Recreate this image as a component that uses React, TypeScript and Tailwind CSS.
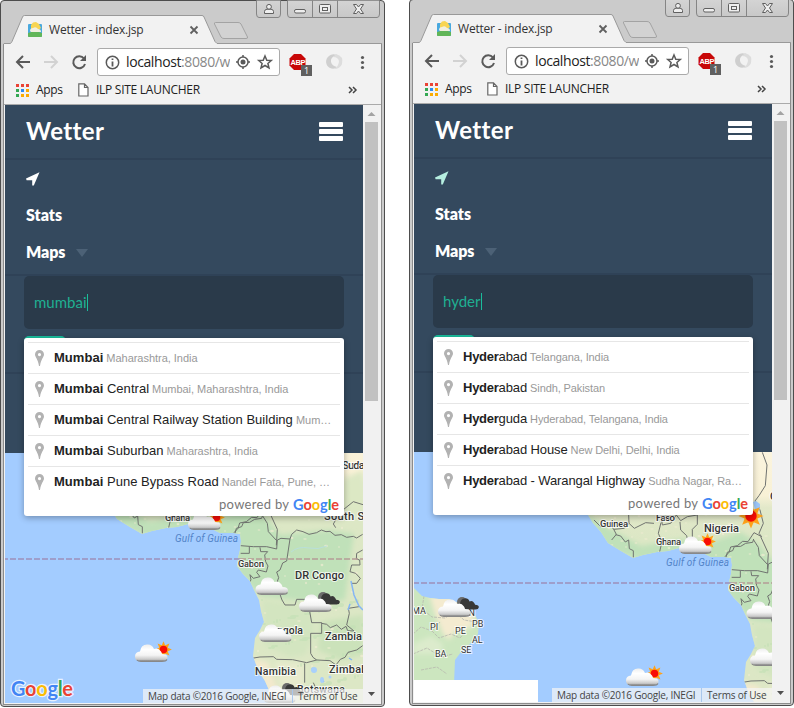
import React from "react";

type Place = { match: string; rest: string; area: string };
type WindowProps = {
  query: string;
  places: Place[];
  arrow: string;
  viewBox: string;
  west?: boolean;
};

const GOOGLE: [string, string][] = [
  ["G", "#4285f4"],
  ["o", "#ea4335"],
  ["o", "#fbbc05"],
  ["g", "#4285f4"],
  ["l", "#34a853"],
  ["e", "#ea4335"],
];

function GoogleLetters() {
  return (
    <>
      {GOOGLE.map(([c, color], i) => (
        <tspan key={i} fill={color}>
          {c}
        </tspan>
      ))}
    </>
  );
}

function Sun({ x, y, r = 4 }: { x: number; y: number; r?: number }) {
  const rays = [0, 45, 90, 135, 180, 225, 270, 315];
  return (
    <g transform={`translate(${x} ${y})`}>
      {rays.map((a) => (
        <path key={a} transform={`rotate(${a})`} d={`M${-r * 0.5} ${-r}L0 ${-r * 2.2}L${r * 0.5} ${-r}Z`} fill="#ffa21a" />
      ))}
      <circle r={r * 1.2} fill="#ffa21a" />
      <circle r={r} fill="#f80d05" />
    </g>
  );
}

const CLOUD = "M5 17Q0 17 0 12.500Q0 8 5 7.500Q6 0.500 12 0.500Q17 0 19 5Q23 3 26 7.500Q27 9 27 10Q33 10 32.500 14Q32 17 28 17Z";

function Weather({ x, y, kind }: { x: number; y: number; kind?: "sun" | "dark" }) {
  return (
    <g transform={`translate(${x} ${y})`}>
      {kind === "sun" && <Sun x={28.5} y={5.5} r={3.8} />}
      {kind === "dark" && (
        <g transform="translate(18 -3)">
          <circle cx="6" cy="6" r="5" fill="#6c6c6c" />
          <path transform="scale(.68) translate(1 3)" d={CLOUD} fill="#383838" />
        </g>
      )}
      <path d={CLOUD} fill="url(#cloudfill)" />
      <path d="M2 16Q3 17.400 6 17.400H27Q31 17.400 32 15.500" fill="none" stroke="#888" strokeWidth="1.100" />
    </g>
  );
}

function Label({ x, y, w, children, size = 11, small = false }: { x: number; y: number; w?: number; children: string; size?: number; small?: boolean }) {
  return (
    <text
      x={x}
      y={y}
      fontSize={size}
      textLength={w}
      fontFamily="Roboto, sans-serif"
      fontWeight={small ? 400 : 500}
      fill="#333"
      stroke="#fff"
      strokeOpacity="0.75"
      strokeWidth="2"
      paintOrder="stroke"
    >
      {children}
    </text>
  );
}

function WorldMap({ viewBox, west }: { viewBox: string; west?: boolean }) {
  return (
    <svg viewBox={viewBox} className="block h-[250px] w-[358px]">
      <defs>
        <linearGradient id="cloudfill" x1="0" y1="0" x2="0" y2="1">
          <stop offset="0" stopColor="#eeeeee" />
          <stop offset=".3" stopColor="#ffffff" />
          <stop offset=".65" stopColor="#f4f4f4" />
          <stop offset=".9" stopColor="#c9c9c9" />
          <stop offset="1" stopColor="#888" />
        </linearGradient>
        <linearGradient id="sahel" x1="0" y1="428" x2="0" y2="515" gradientUnits="userSpaceOnUse">
          <stop offset="0" stopColor="#fbf4de" />
          <stop offset=".5" stopColor="#f8f1d6" />
          <stop offset=".64" stopColor="#e2e8c9" />
          <stop offset="1" stopColor="#dce7c5" />
        </linearGradient>
        <filter id="soft" x="-20%" y="-20%" width="140%" height="140%">
          <feGaussianBlur stdDeviation="2.500" />
        </filter>
        <clipPath id="africa">
          <path d="M60 428L82 470L97 491L102 499L110 508L117 519L130 527L142 534L152 531L166 528L177 527L188 524L206 524L214 530L220 533L233 533L240 534L241 541L240 550L238 558L237 566L243 574L250 581L254 590L259 600L261 611L264 622L260 630L255 638L253 656L258 670L265 681L269 690L272 704H364V428Z" />
        </clipPath>
        <clipPath id="brazil">
          <path d="M-78 563L-74 567L-69 572L-61 574L-52 575L-42 575L-33 579L-26 584L-16 591L-12 599L-13 610L-20 619L-30 628L-36 636L-37 660H-78Z" />
        </clipPath>
      </defs>
      <rect x="-78" y="428" width="442" height="276" fill="#a3ccff" />
      <g clipPath="url(#africa)">
        <rect x="60" y="428" width="304" height="276" fill="url(#sahel)" />
        <g filter="url(#soft)">
          <path d="M95 490L120 505L150 522L190 515L220 518L250 508L268 520L280 535L330 530L354 534L350 560L345 600L315 603L295 600L260 596L235 570V540L160 540L100 520Z" fill="#c0e1b9" />
          <path d="M262 600L295 604L310 612L315 633L305 655L290 657L265 645Z" fill="#d3e5c0" />
          <path d="M320 622L363 615V655L340 660L318 650Z" fill="#cbe2ba" />
          <path d="M250 658L268 662L278 690L290 704H260Z" fill="#f3e9cd" />
          <path d="M275 662L304 664V704H284Z" fill="#e8ebcd" />
          <path d="M345 480L363 470V515L340 510Z" fill="#dce8c4" />
        </g>
        <g fill="#f1edd3" opacity=".7">
          {Array.from({ length: 90 }, (_, i) => {
            const x = 105 + ((i * 67) % 258);
            const y = 491 + ((i * 43) % 44) + (x > 240 ? (i * 17) % 165 : 0);
            return <ellipse key={i} cx={x} cy={y} rx={0.9 + (i % 3) * 0.5} ry={0.7 + (i % 2) * 0.5} />;
          })}
        </g>
        <g fill="#c2e0b4" opacity=".6">
          {Array.from({ length: 75 }, (_, i) => (
            <ellipse key={i} cx={262 + ((i * 53) % 102)} cy={600 + ((i * 37) % 100)} rx={1 + (i % 3)} ry={1 + (i % 2)} />
          ))}
        </g>
        <path d="M291 552Q298 546 309 548Q318 550 327 546" fill="none" stroke="#b9dfda" strokeWidth="1" />
        <g fill="none" stroke="#6f726f" strokeWidth="3" strokeLinejoin="round">
          <g transform="translate(200 500) scale(.33333)">
            <path d="M122 137L160 140L200 140L230 147L232 120L243 115L270 117M148 140V160H122M180 142L182 155L203 155L194 165L197 185L204 198L199 216L175 210L170 217L180 230L160 235L150 224L153 240L148 247" />
            <path d="M105 100L109 85L125 80L130 68L149 67L164 58L185 55L188 45M188 48L202 70L205 95L230 122" />
            <path d="M270 117L275 103L290 90L309 95L327 103L350 98L364 90L378 95L390 94L405 106L424 104L440 112L460 109L470 114L488 103M270 117L265 150L260 183L248 189L240 210L230 216L236 233L230 250" />
            <path d="M240 283L246 300L255 315H285L290 298L322 298L331 345L335 368H365V400H332V460L339 472L350 480M365 370L380 373L391 383L410 375L424 388L438 379L443 392L462 393L440 375L448 340L445 325L477 320" />
            <path d="M155 475L180 471L220 470L230 478L278 479L320 488L350 480L390 482L408 495L421 478L435 472L444 457L470 450L488 437M314 490V548M270 575V608M340 548L350 570L385 580" />
            <path d="M488 150L470 160L469 177L479 180L480 195L455 195L450 215L467 220L481 235L470 250L455 250M370 0L390 18L407 7L430 29L460 5L489 14M407 83L400 72L407 60" />
          </g>
          <g transform="translate(103 416) scale(.33333)">
            <path d="M505 37L519 75L514 137L495 167L483 183L498 210L508 250L495 280L503 290L480 278L462 305L446 304L430 317L410 321L405 337L393 350M500 290L523 340L520 388" />
            <path d="M0 240L20 260L45 248L59 268L91 265L105 250L104 225M59 268L67 283L53 300M65 284L80 288L94 306L104 300L106 326L118 332V352M197 335L204 305L193 280L201 248M201 225L205 255L230 250L247 225L260 242L280 230L310 225V253L295 268V335M258 246L260 270L278 287L285 320M105 250L121 265L155 248L180 250" />
          </g>
        </g>
        <path d="M351 581L354 595L359 606L363 610M348 610L350 604M312 668L315 672M322 680L324 682M349 658L352 660" fill="none" stroke="#86b6f4" strokeWidth="1.500" />
        <path d="M262 478L265 477L269 480V485L265 489Z" fill="#9dc8fb" />
        <g fill="#a9d0fb">
          <ellipse cx="314" cy="670" rx="3" ry="3" />
          <ellipse cx="322" cy="680" rx="2" ry="3" />
          <circle cx="330" cy="677" r="1.500" />
        </g>
      </g>
      <g clipPath="url(#brazil)">
        <rect x="-78" y="555" width="80" height="110" fill="#cce6bf" />
        <g filter="url(#soft)">
          <path d="M-62 570L-30 574L-16 590L-20 604L-35 606L-42 616L-48 610L-56 590Z" fill="#f4ebd0" />
          <path d="M-78 620L-60 612L-48 620L-50 630L-78 630Z" fill="#dcebcc" />
        </g>
        <path d="M-67 572L-69 585L-59 593L-46 594L-36 588L-27 596L-15 598M-78 610L-70 603L-59 607L-51 598M-59 607L-52 614L-40 610L-31 614L-26 608M-78 630L-64 624L-50 633L-38 630M-70 646L-54 643L-44 650" fill="none" stroke="#b7b8ae" strokeWidth=".8" strokeDasharray="3 1" />
      </g>
      <path d="M-78 559H240" stroke="#9d8fbb" strokeWidth="1.500" strokeDasharray="6 2" />
      <path d="M240 559H364" stroke="#b49c96" strokeWidth="1.500" strokeDasharray="6 2" />
      <text x="175" y="542" textLength="63" fontSize="10" fontStyle="italic" fontFamily="Roboto, sans-serif" fill="#5384c9">
        Gulf of Guinea
      </text>
      <Label x={165} y={521} w={25} size={9.5}>Ghana</Label>
      <Label x={238} y={567} w={26} size={9.5}>Gabon</Label>
      {west ? (
        <>
          <Label x={109} y={503} w={28} size={9.5}>Guinea</Label>
          <Label x={165} y={497} w={19} size={9.5}>Faso</Label>
          <Label x={213} y={508} w={35}>Nigeria</Label>
          <Label x={279} y={476} w={24}>Chad</Label>
          <Label x={256} y={699} w={41} size={10.5}>Namibia</Label>
          <Label x={-79} y={590} size={9} small>MA</Label>
          <Label x={-61} y={606} size={9} small>PI</Label>
          <Label x={-36} y={610} size={9} small>PE</Label>
          <Label x={-28} y={592} size={9} small>RN</Label>
          <Label x={-19} y={603} size={9} small>PB</Label>
          <Label x={-19} y={619} size={9} small>AL</Label>
          <Label x={-30} y={629} size={9} small>SE</Label>
          <Label x={-56} y={633} size={9} small>BA</Label>
          <Sun x={260} y={492} r={5.7} />
          <Weather x={-53} y={575} kind="dark" />
        </>
      ) : (
        <>
          <Label x={342} y={469} w={28}>Sudan</Label>
          <Label x={324} y={520} w={66}>South Sudan</Label>
          <Label x={295} y={579} w={49}>DR Congo</Label>
          <Label x={270} y={634} w={33} size={10.5}>Angola</Label>
          <Label x={325} y={640} w={37}>Zambia</Label>
          <Label x={329} y={673} w={53}>Zimbabwe</Label>
          <Label x={255} y={675} w={41} size={10.5}>Namibia</Label>
          <Label x={297} y={693} w={48} size={10.5}>Botswana</Label>
          <Weather x={263} y={685} kind="dark" />
        </>
      )}
      <Weather x={188} y={512} kind="sun" />
      <Weather x={255.5} y={577} />
      <Weather x={299} y={594} kind="dark" />
      <Weather x={259} y={624} />
      <Weather x={135} y={644} kind="sun" />
    </svg>
  );
}

function TabStrip() {
  return (
    <div className="relative h-[42px]">
      <svg className="absolute -left-px -top-px" width="385" height="44" fill="none">
        <defs>
          <linearGradient id="btn" x1="0" y1="0" x2="0" y2="1">
            <stop offset="0" stopColor="#d4d4d4" />
            <stop offset="1" stopColor="#c8c8c8" />
          </linearGradient>
        </defs>
        <path d="M4 43.500H10.500L12 41.500L22.500 17Q23 15.500 24.500 15.500H202Q203.500 15.500 204 17L215 41.500L217 43.500H381V45H4Z" fill="#f2f2f2" />
        <path d="M4 43.500H10.500L12 41.500L22.500 17Q23 15.500 24.500 15.500H202Q203.500 15.500 204 17L215 41.500L217 43.500H382" stroke="#999" />
        <path d="M215.500 22.500H238Q240 22.500 241 24L247.500 37Q248 38.500 246 38.500H224Q222 38.500 221 37L214.500 24Q214 22.500 215.500 22.500Z" fill="#d2d2d2" stroke="#a3a3a3" />
        <g fill="url(#btn)" stroke="#858585">
          <path d="M256.500 .5V14Q256.500 17.500 259 17.500H278Q280.500 17.500 280.500 14V.5" />
          <path d="M287.500 .5V14Q287.500 17.500 290 17.500H377Q379.500 17.500 379.500 14V.5" />
          <path d="M312.500 .5V17M337.500 .5V17" />
        </g>
        <g stroke="#606060" fill="#eee">
          <path d="M264.500 13.500V11.500Q264.500 9.500 267 9.200H271Q273.500 9.500 273.500 11.500V13.500Z" />
          <circle cx="269" cy="6.800" r="2.400" />
          <rect x="294.500" y="9.500" width="11" height="3.500" rx="1.500" />
          <rect x="319.500" y="4.500" width="11" height="8.500" rx="1" />
          <rect x="322.500" y="7.500" width="5" height="3" />
          <path d="M353.500 4.500H356.500L358.500 7L360.500 4.500H363.500L360.500 9L363.500 13.500H360.500L358.500 11L356.500 13.500H353.500L356.500 9Z" />
        </g>
        <path d="M190.500 26.500L197.500 33.500M197.500 26.500L190.500 33.500" stroke="#606060" strokeWidth="1.800" />
        <rect x="28" y="24" width="14" height="13" rx="1" fill="#49a9df" />
        <path d="M28 33Q35 30 42 33V36Q42 37 41 37H29Q28 37 28 36Z" fill="#62b658" />
        <path d="M31 25L33 22.500L36 22L39 24L41 28L37 31H31Z" fill="#f8d553" />
        <path d="M30 31Q30 28 33 28Q36 26 38 29Q41 29 41 32H31Z" fill="#f1efe0" />
      </svg>
      <div className="relative pl-12 pt-[20px] font-['Open_Sans',sans-serif] text-[12px] leading-[18px] tracking-[-0.2px] text-[#333]">
        Wetter - index.jsp
      </div>
    </div>
  );
}

function Toolbar() {
  return (
    <div className="h-[61px] border-b border-[#aaa] font-['Open_Sans',sans-serif] text-[#222]">
      <div className="flex h-9 items-center">
        <svg width="93" height="36" fill="none" stroke="#5a5a5a" strokeWidth="2">
          <path d="M26 18H13M19 12L13 18L19 24" />
          <path d="M40 18H53M47 12L53 18L47 24" stroke="#d2d2d2" />
          <path d="M80 14.500A6 6 0 1 0 81 20" />
          <path d="M82 11V17H76Z" fill="#5a5a5a" stroke="none" />
        </svg>
        <div className="flex h-7 w-[183px] items-center rounded-[3px] border border-[#aaa] bg-white pl-[7px]">
          <svg width="15" height="15" fill="none" stroke="#5a5a5a" strokeWidth="1.500">
            <circle cx="7.500" cy="7.500" r="6.200" />
            <path d="M7.500 6.500V11.500M7.500 3.500V5" strokeWidth="1.800" />
          </svg>
          <div className="ml-[6px] w-[104px] overflow-hidden whitespace-nowrap text-[14px] leading-5 tracking-[-0.4px]">
            localhost<span className="text-[#888]">:8080/w</span>
          </div>
          <svg className="ml-[6px]" width="40" height="18" fill="none" stroke="#5a5a5a" strokeWidth="1.500">
            <circle cx="7" cy="9" r="5" />
            <circle cx="7" cy="9" r="2.500" fill="#5a5a5a" stroke="none" />
            <path d="M7 2V4M7 14V16M0 9H2M12 9H14" />
            <path d="M29 3L30.800 7.200L35.300 7.500L31.900 10.400L33 15L29 12.500L25 15L26.100 10.400L22.700 7.500L27.200 7.200Z" />
          </svg>
        </div>
        <svg className="flex-1" width="97" height="36">
          <path d="M14 10H21L25.500 14.500V21.500L21 26H14L9.500 21.500V14.500Z" fill="#c80808" />
          <text x="10.500" y="21" fontSize="7.500" textLength="15" fontWeight="700" fontFamily="Liberation Sans, sans-serif" fill="#fff">ABP</text>
          <rect x="21" y="21" width="11" height="11" fill="#606060" />
          <text x="24" y="30" fontSize="9" fontFamily="Open Sans, sans-serif" fill="#fff">1</text>
          <path d="M50 24A7 7 0 0 1 49 12Q52 9 57 11Q50 13 51 18Q52 22 57 23Q54 26 50 24Z" fill="#cfcfcf" />
          <path d="M56 10Q64 12 62 20Q60 25 54 25Q59 22 59 17Q58 13 53 13Z" fill="#dddddd" />
          <g fill="#5a5a5a">
            <circle cx="82.500" cy="13.500" r="1.600" />
            <circle cx="82.500" cy="18.500" r="1.600" />
            <circle cx="82.500" cy="23.500" r="1.600" />
          </g>
        </svg>
      </div>
      <div className="flex h-5 items-center text-[12px] leading-5">
        <svg className="ml-3" width="13" height="13">
          {["#ea4335", "#ea4335", "#ea4335", "#34a853", "#2d8cf0", "#fbab00", "#34a853", "#fbab00", "#fbab00"].map((c, i) => (
            <rect key={i} x={(i % 3) * 5} y={Math.floor(i / 3) * 5} width="3" height="3" fill={c} />
          ))}
        </svg>
        <span className="ml-[7px] w-[38px] tracking-[-0.3px]">Apps</span>
        <svg className="ml-1" width="11" height="14" fill="#fff" stroke="#666" strokeWidth="1.200">
          <path d="M.8 .8H6.500L10 4.500V13H.8ZM6.500 .8V4.500H10" />
        </svg>
        <span className="ml-[7px] flex-1 whitespace-nowrap tracking-[-0.27px]">ILP SITE LAUNCHER</span>
        <svg className="mr-[23px]" width="10" height="8" fill="none" stroke="#444" strokeWidth="1.500">
          <path d="M1 1L4 4L1 7M5 1L8 4L5 7" />
        </svg>
      </div>
    </div>
  );
}

function Suggestions({ places, west }: { places: Place[]; west?: boolean }) {
  return (
    <div className="absolute left-[19px] top-[233px] h-[178px] w-80 rounded-[3px] bg-white px-1 pt-1 font-['Liberation_Sans',Arial,sans-serif] shadow-[0_2px_6px_rgba(0,0,0,0.3)]">
      {places.map((p) => (
        <div key={p.match + p.rest + p.area} className="flex h-[31px] items-center border-t border-[#e6e6e6] pl-[7px] pr-[6px]">
          <svg className="shrink-0" width="9" height="16">
            <path fillRule="evenodd" fill="#b2b2b2" d="M4.500 0A4.500 4.500 0 0 0 0 4.500C0 7 3 9 4 16H5C6 9 9 7 9 4.500A4.500 4.500 0 0 0 4.500 0ZM4.500 3A1.600 1.600 0 1 1 4.500 6.200A1.600 1.600 0 0 1 4.500 3Z" />
          </svg>
          <div className={west ? "ml-[10px] flex-1 truncate text-[11px] leading-[30px] tracking-[-0.1px] text-[#999]" : "ml-[10px] flex-1 truncate text-[11px] leading-[30px] tracking-[-0.03px] text-[#999]"}>
            <span className={west ? "text-[13px] tracking-[-0.11px] text-[#222]" : "text-[13px] tracking-[0.03px] text-[#222]"}>
              <b className={west ? "tracking-[-0.25px]" : ""}>{p.match}</b>
              {p.rest}
            </span>{" "}
            {p.area}
          </div>
        </div>
      ))}
      <svg className="ml-auto mr-px block" width="120" height="18">
        <text x="0" y="12" fontSize="13" textLength="70" fontFamily="Lato, sans-serif" fill="#777">powered by</text>
        <text x="74" y="12.500" fontSize="14.500" textLength="46" fontFamily="Lato, sans-serif" fontWeight="700">
          <GoogleLetters />
        </text>
      </svg>
    </div>
  );
}

function BrowserWindow({ query, places, arrow, viewBox, west }: WindowProps) {
  return (
    <div className="h-[707px] w-[385px] shrink-0 rounded-[4px] border border-[#4d4d4d] bg-[#cbcbcb]">
      <TabStrip />
      <div className="mx-[2px] h-[662px] border border-[#8c8c8c] border-t-transparent bg-[#f2f2f2]">
        <Toolbar />
        <div className="ml-px flex h-[598px]">
          <div className="relative w-[358px] bg-[#34495e] font-['Lato',sans-serif] text-white">
            <div className="flex h-[55px] items-center justify-between border-b-2 border-[#2f4257] pl-[21px] pr-5">
              <span className="-mt-0.5 text-[24px] font-bold leading-7 tracking-[0.4px]">Wetter</span>
              <div className="flex flex-col gap-[2px]">
                <div className="h-[5px] w-6 rounded-[1px] bg-white" />
                <div className="h-[5px] w-6 rounded-[1px] bg-white" />
                <div className="h-[5px] w-6 rounded-[1px] bg-white" />
              </div>
            </div>
            <div className="h-[116px] border-b-2 border-[#2f4257] pl-[21px] text-[16px] font-extrabold leading-[35px]">
              <div className="flex h-[37px] items-center">
                <svg width="14" height="14" fill={arrow}>
                  <path d="M13.500 .3L7.800 13.500H6.200V8.200H.6L0 6.600Z" />
                </svg>
              </div>
              <div className="h-[37px]">Stats</div>
              <div className="flex h-[37px] leading-[36px] tracking-[-0.1px]">
                Maps
                <svg className="ml-[11px] mt-[15px]" width="12" height="8" fill="#4c6176">
                  <path d="M0 0H12L6 8Z" />
                </svg>
              </div>
            </div>
            <div className="h-[98px] border-b-2 border-[#2f4257] px-[19px]">
              <div className="flex h-[53px] items-center rounded-[5px] bg-[#2a3a4a] pl-[10px] text-[15px] text-[#1fb092]">
                {query}
                <span className="h-[17px] w-px bg-[#1abc9c]" />
              </div>
              <div className="mt-[7px] h-[30px] w-[42px] rounded-[5px] bg-[#1abc9c]" />
            </div>
            <div className="h-[79px]" />
            <div className="relative h-[250px] overflow-hidden">
              <WorldMap viewBox={viewBox} west={west} />
              {west ? (
                <div className="absolute bottom-0 left-0 h-[22px] w-[124px] bg-white" />
              ) : (
                <svg className="absolute bottom-0 left-[5px]" width="72" height="30">
                  <text x="1" y="23" fontSize="20" textLength="62" fontFamily="Lato, sans-serif" stroke="#fff" strokeOpacity=".75" strokeWidth="2.500" paintOrder="stroke" fontWeight="700">
                    <GoogleLetters />
                  </text>
                </svg>
              )}
              <div className="absolute bottom-0 right-0 flex h-[14px] w-[220px] items-center bg-[#f5f5f5]/70 pl-[5px] font-['Open_Sans',sans-serif] text-[10px] leading-[14px] text-[#444]">
                <span className="w-[144px] whitespace-nowrap tracking-[-0.22px]">Map data ©2016 Google, INEGI</span>
                <span className="h-full w-px bg-[#a9c7ec]" />
                <span className="ml-[5px] whitespace-nowrap tracking-[-0.18px]">Terms of Use</span>
              </div>
            </div>
            <Suggestions places={places} west={west} />
          </div>
          <div className="flex w-[17px] flex-col items-center bg-[#f1f1f1]">
            <svg width="17" height="17" fill="#a3a3a3">
              <path d="M8.500 7L12.500 11H4.500Z" />
            </svg>
            <div className="h-[279px] w-[13px] bg-[#c1c1c1]" />
            <svg className="mt-auto" width="17" height="17" fill="#505050">
              <path d="M5 6H12L8.500 10Z" />
            </svg>
          </div>
        </div>
      </div>
    </div>
  );
}

const mumbai: Place[] = [
  { match: "Mumbai", rest: "", area: "Maharashtra, India" },
  { match: "Mumbai", rest: " Central", area: "Mumbai, Maharashtra, India" },
  { match: "Mumbai", rest: " Central Railway Station Building", area: "Mumbai, Maharashtra, India" },
  { match: "Mumbai", rest: " Suburban", area: "Maharashtra, India" },
  { match: "Mumbai", rest: " Pune Bypass Road", area: "Nandel Fata, Pune, Maharashtra, India" },
];

const hyderabad: Place[] = [
  { match: "Hyder", rest: "abad", area: "Telangana, India" },
  { match: "Hyder", rest: "abad", area: "Sindh, Pakistan" },
  { match: "Hyder", rest: "guda", area: "Hyderabad, Telangana, India" },
  { match: "Hyder", rest: "abad House", area: "New Delhi, Delhi, India" },
  { match: "Hyder", rest: "abad - Warangal Highway", area: "Sudha Nagar, Ramnagar, India" },
];

export default function App() {
  return (
    <main className="flex h-[708px] w-[794px] gap-6 overflow-hidden bg-white">
      <BrowserWindow query="mumbai" places={mumbai} arrow="#ffffff" viewBox="5 453 358 250" />
      <div className="-mt-px">
        <BrowserWindow query="hyder" places={hyderabad} arrow="#b5eee0" viewBox="-77 428 358 250" west />
      </div>
    </main>
  );
}
